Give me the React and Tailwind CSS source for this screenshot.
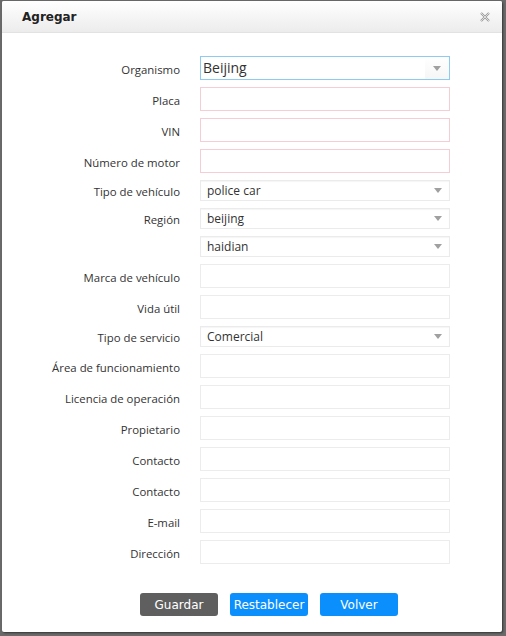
import React from 'react';

const labelFont = { fontFamily: '"Open Sans", "Noto Sans", sans-serif' };

const Arrow = () => (
  <svg width="8" height="5" viewBox="0 0 8 5" className="shrink-0">
    <path d="M0 0 L8 0 L4 5 Z" fill="#a0a0a0" />
  </svg>
);

const TextInput = ({ pink }) => (
  <div
    className={`h-[24px] w-[250px] bg-white border ${pink ? 'border-[#f4cdd5]' : 'border-[#ececec]'}`}
  />
);

const Select = ({ value }) => (
  <div className="h-[21px] w-[250px] bg-white border border-[#ebebeb] shadow-[inset_0_1px_1px_rgba(0,0,0,0.04)] flex items-center justify-between pl-[6px] pr-[7px]">
    <span className="text-[12px] text-[#333] leading-none" style={labelFont}>{value}</span>
    <Arrow />
  </div>
);

const Row = ({ label, children }) => (
  <div className="flex items-center">
    <div className="w-[178px] pt-[3px] text-right text-[11.4px] text-[#333] leading-none" style={labelFont}>
      {label}
    </div>
    <div className="ml-[20px]">{children}</div>
  </div>
);

export default function App() {
  return (
    <div className="w-[506px] h-[636px] bg-[#6a6a6a] overflow-hidden">
      <div className="ml-[2px] mt-[1px] w-[500px] h-[631px] bg-white rounded-[2px] shadow-[1px_1px_2px_rgba(0,0,0,0.5)] flex flex-col">
        <div className="h-[32px] flex items-center justify-between pl-[20px] pr-[12px] bg-gradient-to-b from-white to-[#ececec] border-b border-[#e2e2e2] rounded-t-[2px]">
          <span className="text-[12px] font-bold text-[#222]" style={{ fontFamily: '"DejaVu Sans", Verdana, sans-serif' }}>
            Agregar
          </span>
          <svg width="10" height="10" viewBox="0 0 10 10">
            <path d="M1 1 L9 9 M9 1 L1 9" stroke="#9a9a9a" strokeWidth="2.2" />
            <path d="M1 1 L9 9 M9 1 L1 9" stroke="#eeeeee" strokeWidth="0.8" />
          </svg>
        </div>

        <div className="pt-[23px] flex flex-col gap-[7px]">
          <Row label="Organismo">
            <div className="h-[24px] w-[250px] border border-[#8fcaf0] bg-white flex items-center justify-between">
              <span className="pl-[2px] text-[14px] text-[#333] leading-none" style={labelFont}>Beijing</span>
              <div className="h-full w-[24px] bg-gradient-to-b from-white to-[#f6f6f6] flex items-center justify-center">
                <Arrow />
              </div>
            </div>
          </Row>
          <Row label="Placa"><TextInput pink /></Row>
          <Row label="VIN"><TextInput pink /></Row>
          <Row label="Número de motor"><TextInput pink /></Row>
          <Row label="Tipo de vehículo"><Select value="police car" /></Row>
          <Row label="Región"><Select value="beijing" /></Row>
          <Row label=""><Select value="haidian" /></Row>
          <Row label="Marca de vehículo"><TextInput /></Row>
          <Row label="Vida útil"><TextInput /></Row>
          <Row label="Tipo de servicio"><Select value="Comercial" /></Row>
          <Row label="Área de funcionamiento"><TextInput /></Row>
          <Row label="Licencia de operación"><TextInput /></Row>
          <Row label="Propietario"><TextInput /></Row>
          <Row label="Contacto"><TextInput /></Row>
          <Row label="Contacto"><TextInput /></Row>
          <Row label="E-mail"><TextInput /></Row>
          <Row label="Dirección"><TextInput /></Row>
        </div>

        <div className="mt-[29px] pl-[138px] flex gap-[12px]" style={{ fontFamily: '"DejaVu Sans", Verdana, sans-serif' }}>
          <button className="h-[23px] w-[78px] rounded-[3px] bg-[#5f5f5f] text-white text-[12px]">Guardar</button>
          <button className="h-[23px] w-[78px] rounded-[3px] bg-[#0b8ffc] text-white text-[12px]">Restablecer</button>
          <button className="h-[23px] w-[78px] rounded-[3px] bg-[#0b8ffc] text-white text-[12px]">Volver</button>
        </div>
      </div>
    </div>
  );
}
